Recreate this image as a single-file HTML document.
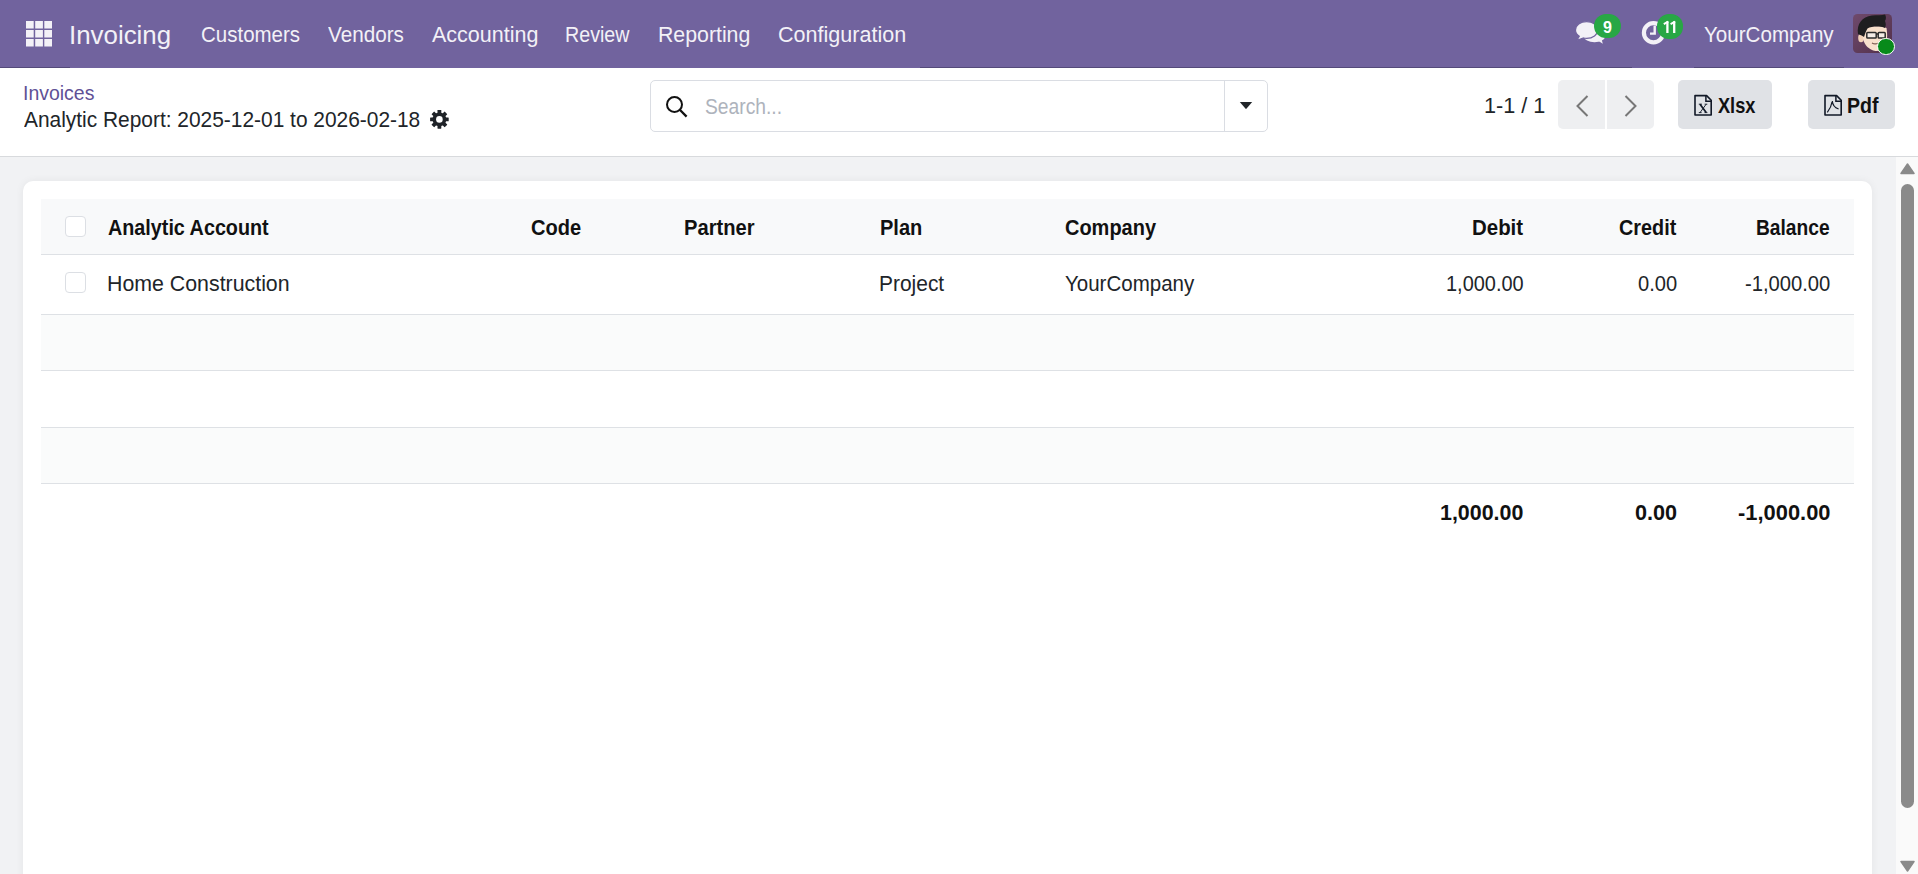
<!DOCTYPE html>
<html><head><meta charset="utf-8">
<style>
html,body{margin:0;padding:0;width:1918px;height:874px;overflow:hidden;background:#fff;font-family:"Liberation Sans",sans-serif;}
.a{position:absolute;}
.t{position:absolute;white-space:pre;line-height:1;font-family:"Liberation Sans",sans-serif;transform-origin:0 0;}
#nav{left:0;top:0;width:1918px;height:68px;background:#71639e;}
#cp{left:0;top:68px;width:1918px;height:88px;background:#fff;}
#cpline{left:0;top:156px;width:1918px;height:1px;background:#d8dadd;}
#content{left:0;top:157px;width:1896px;height:717px;background:#f1f2f4;}
#card{left:23px;top:181px;width:1849px;height:720px;background:#fff;border-radius:10px;box-shadow:0 0 8px rgba(0,0,0,0.06);}
#thead{left:41px;top:199px;width:1813px;height:55px;background:#f8f9fa;}
.hl{position:absolute;left:41px;width:1813px;height:1px;background:#dee1e5;}
.stripe{position:absolute;left:41px;width:1813px;background:#fafbfb;}
.cb{position:absolute;width:18.6px;height:18.6px;border:1px solid #dcdfe4;border-radius:4px;background:#fff;}
#sbtrack{left:1896px;top:157px;width:22px;height:717px;background:#fafafa;}
#thumb{left:1901px;top:184px;width:13px;height:624px;background:#8a8a8a;border-radius:7px;}
#search{left:650px;top:80px;width:618px;height:52px;border:1px solid #dadde3;border-radius:5px;box-sizing:border-box;background:#fff;}
#searchdiv{left:1224px;top:81px;width:1px;height:50px;background:#dadde3;}
#pg1{left:1558px;top:80px;width:47px;height:49px;background:#eeeff1;border-radius:5px 0 0 5px;}
#pg2{left:1607px;top:80px;width:47px;height:49px;background:#eeeff1;border-radius:0 5px 5px 0;}
#bx{left:1678px;top:80px;width:94px;height:49px;background:#e0e2e6;border-radius:5px;}
#bp{left:1808px;top:80px;width:87px;height:49px;background:#e0e2e6;border-radius:5px;}
.badge{position:absolute;height:24px;border-radius:12px;background:#28a745;color:#fff;font-weight:700;font-size:16px;line-height:28px;text-align:center;}
</style></head><body>
<div id="nav" class="a"></div>
<div class="a" style="left:0;top:67px;width:70px;height:1px;background:#544a7a"></div><div class="a" style="left:920px;top:67px;width:712px;height:1px;background:#544a7a"></div><div class="a" style="left:1694px;top:67px;width:150px;height:1px;background:#544a7a"></div>
<!-- grid icon -->
<svg class="a" style="left:26px;top:21px" width="26" height="26" viewBox="0 0 26 26">
<g fill="#f3f1f7">
<rect x="0" y="0" width="7.7" height="7.5"/><rect x="9.2" y="0" width="7.7" height="7.5"/><rect x="18.3" y="0" width="7.7" height="7.5"/>
<rect x="0" y="9" width="7.7" height="7.5"/><rect x="9.2" y="9" width="7.7" height="7.5"/><rect x="18.3" y="9" width="7.7" height="7.5"/>
<rect x="0" y="18" width="7.7" height="7.5"/><rect x="9.2" y="18" width="7.7" height="7.5"/><rect x="18.3" y="18" width="7.7" height="7.5"/>
</g></svg>
<!-- chat icon -->
<svg class="a" style="left:1572px;top:16px" width="40" height="32" viewBox="0 0 40 32">
<g fill="#f3f1f7">
<ellipse cx="22.5" cy="20.5" rx="10.5" ry="5.8"/>
<path d="M25 24 L30.8 27.8 L29 21 Z"/>
</g>
<g fill="#f3f1f7" stroke="#71639e" stroke-width="1.2">
<path d="M14.6 5.6 C8.3 5.6 3.5 9.3 3.5 14 C3.5 16.7 5 18.8 7.3 20.3 L5 24.2 L11.6 22 C12.6 22.3 13.6 22.4 14.6 22.4 C20.9 22.4 25.7 18.7 25.7 14 C25.7 9.3 20.9 5.6 14.6 5.6 Z"/>
</g>
</svg>
<div class="badge" style="left:1594.2px;top:14px;width:26.7px;">9</div>
<!-- clock icon -->
<svg class="a" style="left:1640px;top:18px" width="28" height="30" viewBox="0 0 28 30">
<circle cx="13.5" cy="14.8" r="9.6" fill="none" stroke="#f3f1f7" stroke-width="4.2"/>
<path d="M14.7 7.8 V15.6 H10" fill="none" stroke="#f3f1f7" stroke-width="2.4"/>
</svg>
<div class="badge" style="left:1656.5px;top:14px;width:26.6px;height:24.5px;"></div>
<svg class="a" style="left:1656.5px;top:14px" width="27" height="25" viewBox="0 0 27 25">
<path d="M10.4 7.3 V19" stroke="#fff" stroke-width="2.3"/><path d="M11.2 7.7 L6.8 10.2" stroke="#fff" stroke-width="1.9"/>
<path d="M17.2 7.3 V19" stroke="#fff" stroke-width="2.3"/><path d="M18 7.7 L13.6 10.2" stroke="#fff" stroke-width="1.9"/>
</svg>
<!-- avatar -->
<svg class="a" style="left:1853px;top:14px" width="39" height="39" viewBox="0 0 39 39">
<defs><linearGradient id="avg" x1="0" y1="0" x2="1" y2="1"><stop offset="0" stop-color="#6f4a6c"/><stop offset="1" stop-color="#52304a"/></linearGradient>
<clipPath id="av"><rect width="39" height="39" rx="4.5"/></clipPath></defs>
<g clip-path="url(#av)">
<rect width="39" height="39" fill="url(#avg)"/>
<ellipse cx="8" cy="24" rx="2.8" ry="4.2" fill="#f3d2b8"/>
<path d="M10 14 C14 12.5 28 11 33.5 14 C34.5 20 34.5 27 32 32 C29.5 36 26 37.5 22.5 37 C16 36 11.5 31 10 25 Z" fill="#f8e0cc"/>
<path d="M5 20 C3.5 10 9 2.5 19 1.5 C24 1 29 1.5 32 0.5 C33 2 33.5 5 32 7 C33 9 33 12 32 14 C27 12 19 12 14.5 14.5 C13 17 12 20 11 23 C9 21.5 7 21 5 20 Z" fill="#1e1e20"/>
<rect x="13.8" y="18.6" width="9.4" height="5.4" rx="0.8" fill="#f4ece6" stroke="#2b2b2b" stroke-width="1.5"/>
<rect x="25.2" y="18.6" width="7" height="5.4" rx="0.8" fill="#f4ece6" stroke="#2b2b2b" stroke-width="1.5"/>
<path d="M23.2 20 H25.2" stroke="#2b2b2b" stroke-width="1.3"/>
<path d="M19 29 Q22 30.8 25 29.2" stroke="#7a5548" stroke-width="1.2" fill="#fff"/>
</g></svg>
<div class="a" style="left:1877.4px;top:38px;width:15.4px;height:15.4px;border-radius:50%;background:#078a1a;border:1.2px solid #fff;"></div>

<div id="cp" class="a"></div>
<div id="cpline" class="a"></div>
<!-- gear -->
<svg class="a" style="left:430px;top:110px" width="19" height="19" viewBox="0 0 19 19">
<g fill="#1f2328">
<circle cx="9.4" cy="9.4" r="6.9"/>
<rect x="7.5" y="0.1" width="3.8" height="4" rx="0.4" transform="rotate(0 9.4 9.4)"/><rect x="7.5" y="0.1" width="3.8" height="4" rx="0.4" transform="rotate(45 9.4 9.4)"/><rect x="7.5" y="0.1" width="3.8" height="4" rx="0.4" transform="rotate(90 9.4 9.4)"/><rect x="7.5" y="0.1" width="3.8" height="4" rx="0.4" transform="rotate(135 9.4 9.4)"/><rect x="7.5" y="0.1" width="3.8" height="4" rx="0.4" transform="rotate(180 9.4 9.4)"/><rect x="7.5" y="0.1" width="3.8" height="4" rx="0.4" transform="rotate(225 9.4 9.4)"/><rect x="7.5" y="0.1" width="3.8" height="4" rx="0.4" transform="rotate(270 9.4 9.4)"/><rect x="7.5" y="0.1" width="3.8" height="4" rx="0.4" transform="rotate(315 9.4 9.4)"/>
</g>
<circle cx="9.4" cy="9.4" r="3.3" fill="#fff"/>
</svg>
<div id="search" class="a"></div>
<div id="searchdiv" class="a"></div>
<svg class="a" style="left:665px;top:96px" width="24" height="24" viewBox="0 0 24 24">
<circle cx="9.5" cy="8.5" r="7.5" fill="none" stroke="#111111" stroke-width="2"/>
<path d="M14.8 13.8 L21.6 20.6" stroke="#111111" stroke-width="2.3"/>
</svg>
<svg class="a" style="left:1239px;top:101px" width="14" height="9" viewBox="0 0 14 9">
<path d="M0.8 1 L13.2 1 L7.6 7.6 Q7 8.2 6.4 7.6 Z" fill="#212529"/>
</svg>
<div id="pg1" class="a"></div>
<div id="pg2" class="a"></div>
<svg class="a" style="left:1574px;top:93.5px" width="16" height="24" viewBox="0 0 16 24">
<path d="M13.5 2 L3.5 12 L13.5 22" fill="none" stroke="#777777" stroke-width="2"/>
</svg>
<svg class="a" style="left:1622.5px;top:93.5px" width="16" height="24" viewBox="0 0 16 24">
<path d="M2.5 2 L12.5 12 L2.5 22" fill="none" stroke="#777777" stroke-width="2"/>
</svg>
<div id="bx" class="a"></div>
<div id="bp" class="a"></div>
<svg class="a" style="left:1688px;top:90px" width="30" height="30" viewBox="0 0 30 30">
<path d="M7 5.6 H18.6 L23.2 10.3 V25 H7 Z" fill="none" stroke="#111827" stroke-width="1.6" stroke-linejoin="round"/>
<path d="M17.9 5.6 V11.3 H23.2" fill="none" stroke="#111827" stroke-width="1.5"/>
<path d="M12 14.2 L18.2 22.6" stroke="#111827" stroke-width="1.7"/>
<path d="M18.2 14.2 L12 22.6" stroke="#111827" stroke-width="0.9"/>
<path d="M10.8 14.2 H14 M16.6 14.2 H19.3 M10.8 22.6 H13.6 M16.5 22.6 H19.4" stroke="#111827" stroke-width="0.9"/>
</svg>
<svg class="a" style="left:1818px;top:90px" width="30" height="30" viewBox="0 0 30 30">
<path d="M7 5.6 H18.6 L23.2 10.3 V25 H7 Z" fill="none" stroke="#111827" stroke-width="1.6" stroke-linejoin="round"/>
<path d="M17.9 5.6 V11.3 H23.2" fill="none" stroke="#111827" stroke-width="1.5"/>
<path d="M9.3 22.4 Q13.2 17.5 14.3 11 Q14.6 16.8 20.6 19" fill="none" stroke="#111827" stroke-width="1.2"/>
</svg>

<div id="content" class="a"></div>
<div id="card" class="a"></div>
<div id="thead" class="a"></div>
<div class="hl" style="top:254px"></div>
<div class="stripe" style="top:315px;height:55px"></div>
<div class="hl" style="top:314px"></div>
<div class="hl" style="top:370px"></div>
<div class="stripe" style="top:428px;height:55px"></div>
<div class="hl" style="top:427px"></div>
<div class="hl" style="top:483px"></div>
<div class="cb" style="left:65px;top:216px"></div>
<div class="cb" style="left:65px;top:272px"></div>

<div id="sbtrack" class="a"></div>
<svg class="a" style="left:1900px;top:163px" width="15" height="12" viewBox="0 0 15 12">
<path d="M7.5 1 L14 10.5 H1 Z" fill="#8a8a8a" stroke="#8a8a8a" stroke-width="1.5" stroke-linejoin="round"/>
</svg>
<div id="thumb" class="a"></div>
<svg class="a" style="left:1900px;top:860px" width="15" height="12" viewBox="0 0 15 12">
<path d="M1 1.5 H14 L7.5 11 Z" fill="#8a8a8a" stroke="#8a8a8a" stroke-width="1.5" stroke-linejoin="round"/>
</svg>
<div class="t" style="left:69.29px;top:23.00px;font-size:25.7px;font-weight:400;color:#f3f1f7;transform:scaleX(1.0071)">Invoicing</div>
<div class="t" style="left:200.85px;top:24.80px;font-size:21.5px;font-weight:400;color:#f3f1f7;transform:scaleX(0.9529)">Customers</div>
<div class="t" style="left:328.00px;top:24.80px;font-size:21.5px;font-weight:400;color:#f3f1f7;transform:scaleX(0.9615)">Vendors</div>
<div class="t" style="left:432.00px;top:24.80px;font-size:21.5px;font-weight:400;color:#f3f1f7;transform:scaleX(1.0000)">Accounting</div>
<div class="t" style="left:564.57px;top:24.80px;font-size:21.5px;font-weight:400;color:#f3f1f7;transform:scaleX(0.9145)">Review</div>
<div class="t" style="left:657.62px;top:24.80px;font-size:21.5px;font-weight:400;color:#f3f1f7;transform:scaleX(0.9900)">Reporting</div>
<div class="t" style="left:778.00px;top:24.80px;font-size:21.5px;font-weight:400;color:#f3f1f7;transform:scaleX(1.0024)">Configuration</div>
<div class="t" style="left:1703.74px;top:24.80px;font-size:21.5px;font-weight:400;color:#f3f1f7;transform:scaleX(0.9570)">YourCompany</div>
<div class="t" style="left:22.98px;top:83.00px;font-size:20.3px;font-weight:400;color:#5f5196;transform:scaleX(0.9597)">Invoices</div>
<div class="t" style="left:23.50px;top:110.00px;font-size:21.5px;font-weight:400;color:#212529;transform:scaleX(0.9722)">Analytic Report: 2025-12-01 to 2026-02-18</div>
<div class="t" style="left:704.80px;top:97.40px;font-size:21.5px;font-weight:400;color:#aeb3bc;transform:scaleX(0.8952)">Search...</div>
<div class="t" style="left:1483.89px;top:96.20px;font-size:21.5px;font-weight:400;color:#212529;transform:scaleX(1.0069)">1-1 / 1</div>
<div class="t" style="left:1718.30px;top:95.70px;font-size:21.5px;font-weight:700;color:#111111;transform:scaleX(0.8455)">Xlsx</div>
<div class="t" style="left:1847.49px;top:95.70px;font-size:21.5px;font-weight:700;color:#111111;transform:scaleX(0.9088)">Pdf</div>
<div class="t" style="left:107.88px;top:218.00px;font-size:21.5px;font-weight:700;color:#111111;transform:scaleX(0.9190)">Analytic Account</div>
<div class="t" style="left:530.87px;top:218.00px;font-size:21.5px;font-weight:700;color:#111111;transform:scaleX(0.9327)">Code</div>
<div class="t" style="left:684.06px;top:218.00px;font-size:21.5px;font-weight:700;color:#111111;transform:scaleX(0.9378)">Partner</div>
<div class="t" style="left:879.77px;top:218.00px;font-size:21.5px;font-weight:700;color:#111111;transform:scaleX(0.9326)">Plan</div>
<div class="t" style="left:1064.77px;top:218.00px;font-size:21.5px;font-weight:700;color:#111111;transform:scaleX(0.9289)">Company</div>
<div class="t" style="left:1471.65px;top:218.00px;font-size:21.5px;font-weight:700;color:#111111;transform:scaleX(0.9509)">Debit</div>
<div class="t" style="left:1618.88px;top:218.00px;font-size:21.5px;font-weight:700;color:#111111;transform:scaleX(0.9213)">Credit</div>
<div class="t" style="left:1756.41px;top:218.00px;font-size:21.5px;font-weight:700;color:#111111;transform:scaleX(0.8926)">Balance</div>
<div class="t" style="left:106.82px;top:274.00px;font-size:21.5px;font-weight:400;color:#212529;transform:scaleX(0.9923)">Home Construction</div>
<div class="t" style="left:878.75px;top:274.00px;font-size:21.5px;font-weight:400;color:#212529;transform:scaleX(0.9738)">Project</div>
<div class="t" style="left:1064.75px;top:274.00px;font-size:21.5px;font-weight:400;color:#212529;transform:scaleX(0.9541)">YourCompany</div>
<div class="t" style="left:1446.05px;top:274.00px;font-size:21.5px;font-weight:400;color:#212529;transform:scaleX(0.9272)">1,000.00</div>
<div class="t" style="left:1637.66px;top:274.00px;font-size:21.5px;font-weight:400;color:#212529;transform:scaleX(0.9350)">0.00</div>
<div class="t" style="left:1745.06px;top:274.00px;font-size:21.5px;font-weight:400;color:#212529;transform:scaleX(0.9393)">-1,000.00</div>
<div class="t" style="left:1440.10px;top:503.10px;font-size:21.5px;font-weight:700;color:#111111;transform:scaleX(0.9963)">1,000.00</div>
<div class="t" style="left:1634.59px;top:503.10px;font-size:21.5px;font-weight:700;color:#111111;transform:scaleX(1.0050)">0.00</div>
<div class="t" style="left:1737.88px;top:503.10px;font-size:21.5px;font-weight:700;color:#111111;transform:scaleX(1.0180)">-1,000.00</div>
</body></html>
